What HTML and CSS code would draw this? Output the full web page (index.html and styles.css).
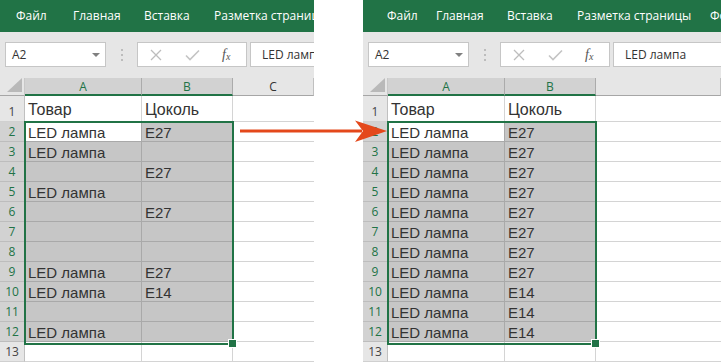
FILE: index.html
```html
<!DOCTYPE html>
<html lang="ru">
<head>
<meta charset="utf-8">
<title>Excel</title>
<link rel="stylesheet" href="styles.css">
</head>
<body>
<div class="page">
  <section class="panel panel-left">
    <div class="ribbon">
      <span class="tab tab-file">Файл</span><span class="tab tab-home">Главная</span><span class="tab tab-ins">Вставка</span><span class="tab tab-layout">Разметка страницы</span>
    </div>
    <div class="fbar">
      <div class="namebox"><span class="nb-text">A2</span><span class="dd"></span></div>
      <div class="dots"><i></i><i></i><i></i></div>
      <div class="fxbox">
        <svg class="ico" width="12" height="12" viewBox="0 0 12 12"><path d="M1 1L11 11M11 1L1 11" stroke="#bdbdbd" stroke-width="1.3" fill="none"/></svg>
        <svg class="ico ico-ok" width="15" height="12" viewBox="0 0 15 12"><path d="M1 6.5L5 10.5L14 1.5" stroke="#c4c4c4" stroke-width="1.6" fill="none"/></svg>
        <span class="fx"><i>f</i><sub>x</sub></span>
      </div>
      <div class="finput">LED лампа</div>
    </div>
    <div class="sheet">
      <div class="grid">
        <div class="corner"><svg width="15" height="14" viewBox="0 0 15 14"><polygon points="15,0 15,14 0,14" fill="#b9b9b9"/></svg></div>
        <div class="ch on">A</div><div class="ch on">B</div><div class="ch">C</div>

        <div class="rh r1">1</div><div class="c h1">Товар</div><div class="c h1">Цоколь</div><div class="c last r1c"></div>
        <div class="rh on">2</div><div class="c act">LED лампа</div><div class="c s">E27</div><div class="c last"></div>
        <div class="rh on">3</div><div class="c s">LED лампа</div><div class="c s"></div><div class="c last"></div>
        <div class="rh on">4</div><div class="c s"></div><div class="c s">E27</div><div class="c last"></div>
        <div class="rh on">5</div><div class="c s">LED лампа</div><div class="c s"></div><div class="c last"></div>
        <div class="rh on">6</div><div class="c s"></div><div class="c s">E27</div><div class="c last"></div>
        <div class="rh on">7</div><div class="c s"></div><div class="c s"></div><div class="c last"></div>
        <div class="rh on">8</div><div class="c s"></div><div class="c s"></div><div class="c last"></div>
        <div class="rh on">9</div><div class="c s">LED лампа</div><div class="c s">E27</div><div class="c last"></div>
        <div class="rh on">10</div><div class="c s">LED лампа</div><div class="c s">E14</div><div class="c last"></div>
        <div class="rh on">11</div><div class="c s"></div><div class="c s"></div><div class="c last"></div>
        <div class="rh on">12</div><div class="c s">LED лампа</div><div class="c s"></div><div class="c last"></div>
        <div class="rh">13</div><div class="c"></div><div class="c"></div><div class="c last"></div>
      </div>
      <div class="sel"><span class="handle"></span></div>
    </div>
  </section>

  <section class="panel panel-right">
    <div class="ribbon">
      <span class="tab tab-file">Файл</span><span class="tab tab-home">Главная</span><span class="tab tab-ins">Вставка</span><span class="tab tab-layout">Разметка страницы</span><span class="tab">Фо</span>
    </div>
    <div class="fbar">
      <div class="namebox"><span class="nb-text">A2</span><span class="dd"></span></div>
      <div class="dots"><i></i><i></i><i></i></div>
      <div class="fxbox">
        <svg class="ico" width="12" height="12" viewBox="0 0 12 12"><path d="M1 1L11 11M11 1L1 11" stroke="#bdbdbd" stroke-width="1.3" fill="none"/></svg>
        <svg class="ico ico-ok" width="15" height="12" viewBox="0 0 15 12"><path d="M1 6.5L5 10.5L14 1.5" stroke="#c4c4c4" stroke-width="1.6" fill="none"/></svg>
        <span class="fx"><i>f</i><sub>x</sub></span>
      </div>
      <div class="finput">LED лампа</div>
    </div>
    <div class="sheet">
      <div class="grid">
        <div class="corner"><svg width="15" height="14" viewBox="0 0 15 14"><polygon points="15,0 15,14 0,14" fill="#b9b9b9"/></svg></div>
        <div class="ch on">A</div><div class="ch on">B</div><div class="ch"></div>

        <div class="rh r1">1</div><div class="c h1">Товар</div><div class="c h1">Цоколь</div><div class="c last r1c"></div>
        <div class="rh on">2</div><div class="c act">LED лампа</div><div class="c s">E27</div><div class="c last"></div>
        <div class="rh on">3</div><div class="c s">LED лампа</div><div class="c s">E27</div><div class="c last"></div>
        <div class="rh on">4</div><div class="c s">LED лампа</div><div class="c s">E27</div><div class="c last"></div>
        <div class="rh on">5</div><div class="c s">LED лампа</div><div class="c s">E27</div><div class="c last"></div>
        <div class="rh on">6</div><div class="c s">LED лампа</div><div class="c s">E27</div><div class="c last"></div>
        <div class="rh on">7</div><div class="c s">LED лампа</div><div class="c s">E27</div><div class="c last"></div>
        <div class="rh on">8</div><div class="c s">LED лампа</div><div class="c s">E27</div><div class="c last"></div>
        <div class="rh on">9</div><div class="c s">LED лампа</div><div class="c s">E27</div><div class="c last"></div>
        <div class="rh on">10</div><div class="c s">LED лампа</div><div class="c s">E14</div><div class="c last"></div>
        <div class="rh on">11</div><div class="c s">LED лампа</div><div class="c s">E14</div><div class="c last"></div>
        <div class="rh on">12</div><div class="c s">LED лампа</div><div class="c s">E14</div><div class="c last"></div>
        <div class="rh">13</div><div class="c"></div><div class="c"></div><div class="c last"></div>
      </div>
      <div class="sel"><span class="handle"></span></div>
    </div>
  </section>

  <svg class="arrow" width="152" height="26" viewBox="0 0 152 26">
    <line x1="4" y1="13" x2="126" y2="13" stroke="#e4481b" stroke-width="3"/>
    <polygon points="151,13 119,2.5 127,13 119,24" fill="#e4481b"/>
  </svg>
</div>
</body>
</html>
```

FILE: styles.css
```css
* { box-sizing: border-box; }
html, body { margin: 0; padding: 0; background: #ffffff; }
body { width: 721px; height: 362px; overflow: hidden; }

.page {
  position: relative;
  display: flex;
  gap: 49px;
  width: 721px;
  height: 362px;
}

.panel {
  display: flex;
  flex-direction: column;
  height: 362px;
  overflow: hidden;
}
.panel-left { width: 314px; }
.panel-right { width: 358px; }

/* Ribbon */
.ribbon {
  height: 32px;
  background: #217346;
  color: #ffffff;
  font-family: "Open Sans", "Noto Sans", sans-serif;
  font-size: 12px;
  line-height: 32px;
  white-space: nowrap;
  display: flex;
  flex-shrink: 0;
}
.tab { display: block; flex-shrink: 0; }
.panel-left .ribbon { padding-left: 16px; }
.panel-right .ribbon { padding-left: 24px; }
.panel-left .tab-file { width: 57px; }
.panel-right .tab-file { width: 49px; }
.tab-home { width: 71px; }
.tab-ins { width: 70px; }
.tab-layout { width: 133px; }

/* Formula bar */
.fbar {
  height: 46px;
  background: #e6e6e6;
  display: flex;
  align-items: flex-start;
  padding: 10px 0 0 5px;
  flex-shrink: 0;
  font-family: "Open Sans", "Noto Sans", sans-serif;
  font-size: 12px;
  color: #333333;
}
.namebox, .fxbox, .finput {
  height: 25px;
  background: #ffffff;
  border: 1px solid #c6c6c6;
}
.namebox {
  width: 101px;
  display: flex;
  align-items: center;
  justify-content: space-between;
  padding: 0 5px 0 6px;
}
.dd {
  width: 0;
  height: 0;
  border-left: 4px solid transparent;
  border-right: 4px solid transparent;
  border-top: 4px solid #808080;
  margin-top: 1px;
}
.dots {
  width: 31px;
  height: 25px;
  display: flex;
  flex-direction: column;
  align-items: center;
  justify-content: center;
  gap: 3px;
}
.dots i {
  display: block;
  width: 2px;
  height: 2px;
  background: #bcbcbc;
}
.fxbox {
  width: 110px;
  display: flex;
  align-items: center;
  padding-left: 12px;
}
.ico { display: block; }
.ico-ok { margin-left: 23px; }
.fx {
  margin-left: 22px;
  font-family: "Liberation Serif", serif;
  font-size: 14px;
  color: #555555;
  line-height: 1;
}
.fx i { font-style: italic; }
.fx sub { font-size: 10px; font-style: italic; vertical-align: -1px; }
.finput {
  flex: 1;
  margin-left: 3px;
  border-right: none;
  padding-left: 11px;
  line-height: 23px;
  white-space: nowrap;
  overflow: hidden;
}

/* Sheet */
.sheet {
  position: relative;
  flex: 1;
}
.grid {
  display: grid;
  grid-template-columns: 25px 117px 91px 1fr;
  grid-template-rows: 18px 26px repeat(12, 20px);
}
.corner {
  background: #e6e6e6;
  border-right: 1px solid #c8c8c8;
  border-bottom: 1px solid #a6a6a6;
  display: flex;
  align-items: flex-end;
  justify-content: flex-end;
  padding: 0 2px 3px 0;
}
.corner svg { display: block; }
.ch {
  background: #e6e6e6;
  border-right: 1px solid #c0c0c0;
  border-bottom: 1px solid #a6a6a6;
  font-family: "Open Sans", "Noto Sans", sans-serif;
  font-size: 12px;
  line-height: 17px;
  text-align: center;
  color: #333333;
}
.ch.on {
  background: #d2d2d2;
  border-right-color: #ababab;
  border-bottom: 2px solid #217346;
  color: #217346;
}
.ch:last-child { border-right: none; }

.rh {
  background: #e6e6e6;
  border-right: 1px solid #c0c0c0;
  border-bottom: 1px solid #d0d0d0;
  font-family: "Open Sans", "Noto Sans", sans-serif;
  font-size: 12px;
  color: #444444;
  text-align: center;
  display: flex;
  align-items: flex-end;
  justify-content: center;
  line-height: 18px;
}
.rh.on {
  background: #d2d2d2;
  color: #217346;
  border-bottom-color: #bdbdbd;
}

.c {
  border-right: 1px solid #d4d4d4;
  border-bottom: 1px solid #d4d4d4;
  font-family: "Liberation Sans", Arial, sans-serif;
  font-size: 15px;
  color: #333333;
  padding-left: 3px;
  white-space: nowrap;
  overflow: hidden;
  display: flex;
  align-items: flex-end;
  line-height: 17px;
}
.c.h1 { font-size: 16px; line-height: 20px; padding-bottom: 1px; }
.c.s {
  background: #c6c6c6;
  border-right-color: #a9a9a9;
  border-bottom-color: #a9a9a9;
}
.c.act {
  background: #ffffff;
  border-right-color: #a9a9a9;
  border-bottom-color: #a9a9a9;
}
.c.last { border-right: none; }

/* Selection overlay */
.sel {
  position: absolute;
  left: 24px;
  top: 43px;
  width: 210px;
  height: 224px;
  border: 2px solid #217346;
  pointer-events: none;
}
.handle {
  position: absolute;
  right: -4px;
  bottom: -4px;
  width: 7px;
  height: 7px;
  background: #217346;
  border: 1px solid #ffffff;
  box-sizing: content-box;
  margin: -1px;
}

/* Arrow */
.arrow {
  position: absolute;
  left: 236px;
  top: 118px;
  display: block;
}
```
